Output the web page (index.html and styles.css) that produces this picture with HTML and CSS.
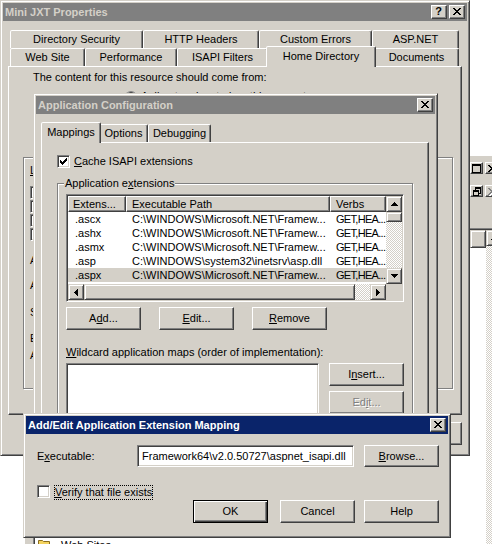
FILE: index.html
```html
<!DOCTYPE html>
<html lang="en">
<head>
<meta charset="utf-8">
<title>Mini JXT Properties</title>
<link rel="stylesheet" href="styles.css">
</head>
<body>

<div class="mmc">
  <div class="mmc-bar">
    <span class="mbtn"><svg width="9" height="9" viewBox="0 0 9 9"><path d="M0 0h9v2H0zM0 2h1v7H0zM8 2h1v7H8zM1 8h7v1H1z"/></svg></span>
    <span class="mbtn"><svg width="8" height="7" viewBox="0 0 8 7"><path d="M0 0h2v1H0zM6 0h2v1H6zM1 1h2v1H1zM5 1h2v1H5zM2 2h4v1H2zM3 3h2v1H3zM2 4h4v1H2zM1 5h2v1H1zM5 5h2v1H5zM0 6h2v1H0zM6 6h2v1H6z"/></svg></span>
  </div>
  <div class="mmc-bar">
    <span class="mbtn"><svg width="8" height="9" viewBox="0 0 8 9"><path d="M2 0h6v2H2zM2 2h1v1H2zM7 2h1v5H7zM6 6h1v1H6zM0 3h6v2H0zM0 5h1v4H0zM5 5h1v4H5zM1 8h4v1H1z"/></svg></span>
    <span class="mbtn off"><svg width="8" height="7" viewBox="0 0 8 7"><path d="M0 0h2v1H0zM6 0h2v1H6zM1 1h2v1H1zM5 1h2v1H5zM2 2h4v1H2zM3 3h2v1H3zM2 4h4v1H2zM1 5h2v1H1zM5 5h2v1H5zM0 6h2v1H0zM6 6h2v1H6z"/></svg></span>
  </div>
  <div class="mmc-list">
    <div class="mmc-body"><div class="mmc-head raised"></div></div>
    <div class="mmc-vs">
      <span class="sbtn"><svg width="7" height="4" viewBox="0 0 7 4"><path d="M3 0h1v1H3zM2 1h3v1H2zM1 2h5v1H1zM0 3h7v1H0z"/></svg></span>
      <div class="track"></div>
    </div>
  </div>
</div>

<div class="tree">
  <div class="tree-in">
    <svg class="folder" width="12" height="10" viewBox="0 0 12 10"><path d="M0.5 1.5h4l1 1h6v7h-11z" fill="#f4d35e" stroke="#8a6d1e"/></svg>
    <span>Web Sites</span>
  </div>
</div>

<div class="win main">
  <div class="titlebar inactive">
    <span class="ttl">Mini JXT Properties</span>
    <span class="cbtn help">?</span>
    <span class="cbtn"><svg width="8" height="7" viewBox="0 0 8 7"><path d="M0 0h2v1H0zM6 0h2v1H6zM1 1h2v1H1zM5 1h2v1H5zM2 2h4v1H2zM3 3h2v1H3zM2 4h4v1H2zM1 5h2v1H1zM5 5h2v1H5zM0 6h2v1H0zM6 6h2v1H6z"/></svg></span>
  </div>
  <div class="sheet main-sheet">
    <div class="tabrow r1">
      <div class="tab">Directory Security</div>
      <div class="tab">HTTP Headers</div>
      <div class="tab">Custom Errors</div>
      <div class="tab">ASP.NET</div>
    </div>
    <div class="tabrow r2">
      <div class="tab">Web Site</div>
      <div class="tab">Performance</div>
      <div class="tab">ISAPI Filters</div>
      <div class="tab sel">Home Directory</div>
      <div class="tab">Documents</div>
    </div>
    <div class="panel main-panel">
      <div class="hd-intro">The content for this resource should come from:</div>
      <div class="hd-radio"><span class="radio"></span><span>A directory located on this computer</span></div>
      <div class="hd-group">
        <div class="hd-lbl l1"><u>L</u>ocal path:</div>
        <div class="hd-checks">
          <span class="chk"></span>
          <span class="chk"></span>
          <span class="chk"></span>
          <span class="chk"></span>
        </div>
        <div class="hd-lbl l2">Application settings</div>
        <div class="hd-lbl l3">Application name:</div>
        <div class="hd-lbl l4">Starting point:</div>
        <div class="hd-lbl l5">Execute permissions:</div>
        <div class="hd-lbl l6">Application pool:</div>
      </div>
    </div>
  </div>
  <div class="main-buttons">
    <span class="btn">OK</span>
    <span class="btn">Cancel</span>
    <span class="btn">Apply</span>
    <span class="btn">Help</span>
  </div>
</div>

<div class="win appcfg">
  <div class="titlebar inactive">
    <span class="ttl">Application Configuration</span>
    <span class="cbtn"><svg width="8" height="7" viewBox="0 0 8 7"><path d="M0 0h2v1H0zM6 0h2v1H6zM1 1h2v1H1zM5 1h2v1H5zM2 2h4v1H2zM3 3h2v1H3zM2 4h4v1H2zM1 5h2v1H1zM5 5h2v1H5zM0 6h2v1H0zM6 6h2v1H6z"/></svg></span>
  </div>
  <div class="sheet ac-sheet">
    <div class="tabrow">
      <div class="tab sel">Mappings</div>
      <div class="tab">Options</div>
      <div class="tab">Debugging</div>
    </div>
    <div class="panel ac-panel">
      <div class="ac-cache">
        <span class="chk"><svg width="7" height="7" viewBox="0 0 7 7"><path d="M6 0h1v1H6zM5 1h2v1H5zM0 2h1v1H0zM4 2h3v1H4zM0 3h2v1H0zM3 3h3v1H3zM0 4h5v1H0zM1 5h3v1H1zM2 6h1v1H2z"/></svg></span>
        <span><u>C</u>ache ISAPI extensions</span>
      </div>
      <div class="group">
        <div class="group-lbl">Application e<u>x</u>tensions</div>
        <div class="lv sunken">
          <div class="lv-grid">
            <div class="lv-body">
              <div class="lv-head">
                <span class="hc c1">Extens...</span>
                <span class="hc c2">Executable Path</span>
                <span class="hc c3">Verbs</span>
              </div>
              <div class="lv-row"><span class="c1">.ascx</span><span class="c2">C:\WINDOWS\Microsoft.NET\Framew...</span><span class="c3">GET,HEA...</span></div>
              <div class="lv-row"><span class="c1">.ashx</span><span class="c2">C:\WINDOWS\Microsoft.NET\Framew...</span><span class="c3">GET,HEA...</span></div>
              <div class="lv-row"><span class="c1">.asmx</span><span class="c2">C:\WINDOWS\Microsoft.NET\Framew...</span><span class="c3">GET,HEA...</span></div>
              <div class="lv-row"><span class="c1">.asp</span><span class="c2">C:\WINDOWS\system32\inetsrv\asp.dll</span><span class="c3">GET,HEA...</span></div>
              <div class="lv-row sel"><span class="c1">.aspx</span><span class="c2">C:\WINDOWS\Microsoft.NET\Framew...</span><span class="c3">GET,HEA...</span></div>
              <div class="lv-row"><span class="c1">.axd</span><span class="c2">C:\WINDOWS\Microsoft.NET\Framew...</span><span class="c3">GET,HEA...</span></div>
            </div>
            <div class="vscroll">
              <span class="sbtn"><svg width="7" height="4" viewBox="0 0 7 4"><path d="M3 0h1v1H3zM2 1h3v1H2zM1 2h5v1H1zM0 3h7v1H0z"/></svg></span>
              <span class="raised vthumb"></span>
              <div class="track"></div>
              <span class="sbtn"><svg width="7" height="4" viewBox="0 0 7 4"><path d="M0 0h7v1H0zM1 1h5v1H1zM2 2h3v1H2zM3 3h1v1H3z"/></svg></span>
            </div>
            <div class="hscroll">
              <span class="sbtn"><svg width="4" height="7" viewBox="0 0 4 7"><path d="M3 0h1v7H3zM2 1h1v5H2zM1 2h1v3H1zM0 3h1v1H0z"/></svg></span>
              <span class="raised hthumb"></span>
              <div class="track"></div>
              <span class="sbtn"><svg width="4" height="7" viewBox="0 0 4 7"><path d="M0 0h1v7H0zM1 1h1v5H1zM2 2h1v3H2zM3 3h1v1H3z"/></svg></span>
            </div>
            <div class="corner"></div>
          </div>
        </div>
        <div class="btnrow">
          <span class="btn">A<u>d</u>d...</span>
          <span class="btn"><u>E</u>dit...</span>
          <span class="btn"><u>R</u>emove</span>
        </div>
        <div class="wc-lbl"><u>W</u>ildcard application maps (order of implementation):</div>
        <div class="wc-row">
          <div class="wc-list sunken"></div>
          <div class="wc-btns">
            <span class="btn">I<u>n</u>sert...</span>
            <span class="btn dis">Ed<u>i</u>t...</span>
          </div>
        </div>
      </div>
    </div>
  </div>
</div>

<div class="win addedit">
  <div class="titlebar active">
    <span class="ttl">Add/Edit Application Extension Mapping</span>
    <span class="cbtn"><svg width="8" height="7" viewBox="0 0 8 7"><path d="M0 0h2v1H0zM6 0h2v1H6zM1 1h2v1H1zM5 1h2v1H5zM2 2h4v1H2zM3 3h2v1H3zM2 4h4v1H2zM1 5h2v1H1zM5 5h2v1H5zM0 6h2v1H0zM6 6h2v1H6z"/></svg></span>
  </div>
  <div class="ae-row1">
    <span class="ae-lbl">E<u>x</u>ecutable:</span>
    <div class="textbox sunken">Framework64\v2.0.50727\aspnet_isapi.dll</div>
    <span class="btn"><u>B</u>rowse...</span>
  </div>
  <div class="ae-row2">
    <span class="chk"></span>
    <span class="focus"><u>V</u>erify that file exists</span>
  </div>
  <div class="ae-row3">
    <span class="btn def">OK</span>
    <span class="btn">Cancel</span>
    <span class="btn">Help</span>
  </div>
</div>

</body>
</html>
```

FILE: styles.css
```css
* { box-sizing: border-box; }
html, body { margin: 0; padding: 0; }
body {
  position: relative;
  width: 492px;
  height: 544px;
  overflow: hidden;
  background: #fff;
  font-family: "Liberation Sans", Arial, sans-serif;
  font-size: 11px;
  line-height: 13px;
  color: #000;
}
u { text-decoration: underline; text-underline-offset: 1px; }
svg { display: block; }

/* ---------- generic windows ---------- */
.win {
  position: absolute;
  background: #d4d0c8;
  border: 1px solid;
  border-color: #d4d0c8 #404040 #404040 #d4d0c8;
  box-shadow: inset 1px 1px 0 #fff, inset -1px -1px 0 #808080;
  padding: 2px;
}
.main { left: 0; top: 0; width: 470px; height: 456px; }
.appcfg { left: 33px; top: 93px; width: 405px; height: 360px; }
.addedit { left: 23px; top: 413px; width: 428px; height: 125px; }

.titlebar {
  display: flex;
  align-items: center;
  height: 18px;
  padding: 0 2px;
  font-weight: bold;
  white-space: nowrap;
}
.titlebar.inactive { background: #808080; color: #d4d0c8; }
.titlebar.active { background: #0a246a; color: #fff; }
.ttl { flex: 1; overflow: hidden; }
.cbtn {
  flex: none;
  display: flex;
  align-items: center;
  justify-content: center;
  width: 16px;
  height: 14px;
  padding: 0 1px 1px 0;
  background: #d4d0c8;
  color: #000;
  border: 1px solid;
  border-color: #fff #404040 #404040 #fff;
  box-shadow: inset -1px -1px 0 #808080;
  font-size: 11px;
}
.cbtn.help { margin-right: 2px; font-weight: bold; }
.cbtn svg { fill: #000; }

.raised {
  background: #d4d0c8;
  border: 1px solid;
  border-color: #d4d0c8 #404040 #404040 #d4d0c8;
  box-shadow: inset 1px 1px 0 #fff, inset -1px -1px 0 #808080;
}
.sunken {
  background: #fff;
  border: 1px solid;
  border-color: #808080 #fff #fff #808080;
  box-shadow: inset 1px 1px 0 #404040, inset -1px -1px 0 #d4d0c8;
  padding: 1px;
}

/* ---------- buttons / checkboxes ---------- */
.btn {
  flex: none;
  display: flex;
  align-items: center;
  justify-content: center;
  width: 75px;
  height: 23px;
  background: #d4d0c8;
  border: 1px solid;
  border-color: #fff #404040 #404040 #fff;
  box-shadow: inset -1px -1px 0 #808080;
  white-space: nowrap;
}
.btn.def {
  border-color: #000;
  box-shadow: inset 1px 1px 0 #fff, inset -1px -1px 0 #404040, inset -2px -2px 0 #808080;
}
.btn.dis { color: #808080; text-shadow: 1px 1px 0 #fff; }

.chk {
  flex: none;
  display: block;
  width: 13px;
  height: 13px;
  padding: 2px 0 0 2px;
  background: #fff;
  border: 1px solid;
  border-color: #808080 #fff #fff #808080;
  box-shadow: inset 1px 1px 0 #404040, inset -1px -1px 0 #d4d0c8;
}
.radio {
  flex: none;
  width: 12px;
  height: 12px;
  border-radius: 50%;
  background: #fff;
  border: 1px solid;
  border-color: #808080 #fff #fff #808080;
  box-shadow: inset 1px 1px 0 #404040;
}

/* ---------- tabs ---------- */
.sheet { margin-left: 5px; }
.main-sheet { margin-top: 9px; width: 454px; }
.ac-sheet { margin-top: 10px; width: 388px; }
.tabrow { display: flex; height: 18px; padding-left: 2px; }
.tab {
  flex: none;
  height: 18px;
  background: #d4d0c8;
  border: 1px solid;
  border-bottom: 0;
  border-color: #fff #404040 transparent #fff;
  border-radius: 2px 2px 0 0;
  box-shadow: inset -1px 0 0 #808080;
  text-align: center;
  line-height: 16px;
  white-space: nowrap;
  overflow: hidden;
}
.tab.sel {
  position: relative;
  z-index: 1;
  height: 21px;
  margin: -2px -2px 0;
  line-height: 18px;
}
.main-sheet .r1 .tab:nth-child(1) { width: 133px; }
.main-sheet .r1 .tab:nth-child(2) { width: 116px; }
.main-sheet .r1 .tab:nth-child(3) { width: 113px; }
.main-sheet .r1 .tab:nth-child(4) { width: 87px; }
.main-sheet .r2 .tab:nth-child(1) { width: 75px; }
.main-sheet .r2 .tab:nth-child(2) { width: 92px; }
.main-sheet .r2 .tab:nth-child(3) { width: 91px; }
.main-sheet .r2 .tab:nth-child(4) { width: 110px; }
.main-sheet .r2 .tab:nth-child(5) { width: 85px; }
.ac-sheet .tab:nth-child(1) { width: 60px; }
.ac-sheet .tab:nth-child(2) { width: 49px; }
.ac-sheet .tab:nth-child(3) { width: 63px; }

.panel {
  background: #d4d0c8;
  border: 1px solid;
  border-color: #fff #404040 #404040 #fff;
  box-shadow: inset -1px -1px 0 #808080;
}

/* ---------- main property sheet ---------- */
.main-panel { height: 349px; overflow: hidden; }
.hd-intro { margin: 4px 0 0 24px; }
.hd-radio {
  display: flex;
  align-items: center;
  gap: 4px;
  height: 13px;
  margin: 6px 0 0 116px;
}
.hd-group {
  width: 430px;
  height: 232px;
  margin: 54px 0 0 14px;
  padding: 6px 0 0 6px;
  border: 1px solid #808080;
  box-shadow: inset 1px 1px 0 #fff, 1px 1px 0 #fff;
}
.hd-checks { display: flex; flex-direction: column; gap: 1px; margin-top: 9px; }
.hd-lbl.l2 { margin-top: 13px; }
.hd-lbl.l3 { margin-top: 12px; }
.hd-lbl.l4 { margin-top: 14px; }
.hd-lbl.l5 { margin-top: 13px; }
.hd-lbl.l6 { margin-top: 4px; }
.main-buttons {
  display: flex;
  justify-content: flex-end;
  gap: 6px;
  margin-top: 7px;
  padding-right: 5px;
}

/* ---------- application configuration ---------- */
.ac-panel { height: 300px; overflow: hidden; }
.ac-cache {
  display: flex;
  align-items: center;
  gap: 4px;
  height: 13px;
  margin: 12px 0 0 15px;
}
.group {
  width: 356px;
  height: 250px;
  margin: 15px 0 0 15px;
  border: 1px solid #808080;
  box-shadow: inset 1px 1px 0 #fff, 1px 1px 0 #fff;
}
.group-lbl {
  width: max-content;
  margin: -7px 0 0 6px;
  padding: 0 1px;
  background: #d4d0c8;
}

.lv { width: 338px; height: 108px; margin: 4px 0 0 8px; }
.lv-grid {
  display: grid;
  grid-template-columns: 318px 16px;
  grid-template-rows: 88px 16px;
}
.lv-body { overflow: hidden; background: #fff; }
.lv-head, .lv-row { display: flex; white-space: nowrap; }
.lv-head { height: 16px; }
.hc {
  flex: none;
  height: 16px;
  overflow: hidden;
  padding-left: 5px;
  line-height: 14px;
  background: #d4d0c8;
  border: 1px solid;
  border-color: #fff #404040 #404040 #fff;
  box-shadow: inset -1px -1px 0 #808080;
}
.hc.c1 { padding-left: 4px; }
.lv-row { height: 14px; line-height: 14px; }
.lv-row span { flex: none; overflow: hidden; }
.c1 { width: 58px; }
.c2 { width: 204px; }
.c3 { width: 56px; }
.lv-row .c1 { padding-left: 7px; }
.lv-row .c2 { padding-left: 6px; }
.lv-row .c3 { padding-left: 6px; letter-spacing: -0.7px; }
.lv-row.sel { background: #d4d0c8; }

.sbtn {
  flex: none;
  display: flex;
  align-items: center;
  justify-content: center;
  width: 16px;
  height: 16px;
  background: #d4d0c8;
  border: 1px solid;
  border-color: #d4d0c8 #404040 #404040 #d4d0c8;
  box-shadow: inset 1px 1px 0 #fff, inset -1px -1px 0 #808080;
}
.sbtn svg { fill: #000; }
.vscroll { display: flex; flex-direction: column; }
.hscroll { display: flex; }
.vthumb { flex: none; width: 16px; height: 10px; }
.hthumb { flex: none; width: 271px; height: 16px; }
.track {
  flex: 1;
  background: repeating-conic-gradient(#fff 0 25%, #d4d0c8 0 50%) 0 0 / 2px 2px;
}
.corner { background: #d4d0c8; }

.btnrow { display: flex; gap: 18px; margin: 5px 0 0 8px; }
.wc-lbl { margin: 16px 0 0 8px; }
.wc-row { display: flex; margin: 4px 0 0 8px; }
.wc-list { width: 253px; height: 80px; }
.wc-btns { display: flex; flex-direction: column; gap: 5px; margin-left: 10px; }

/* ---------- add/edit mapping dialog ---------- */
.ae-row1 {
  display: flex;
  align-items: center;
  height: 22px;
  margin: 11px 0 0 11px;
}
.ae-lbl { width: 100px; }
.textbox {
  width: 217px;
  height: 22px;
  padding: 0 0 0 4px;
  line-height: 20px;
  white-space: nowrap;
  overflow: hidden;
}
.ae-row1 .btn { height: 22px; margin-left: 10px; }
.ae-row2 {
  display: flex;
  align-items: flex-start;
  margin: 18px 0 0 11px;
}
.focus { margin-left: 4px; border: 1px dotted #000; line-height: 13px; }
.ae-row3 { display: flex; justify-content: flex-end; padding-right: 9px; }
.ae-row3 .btn.def { margin-right: 12px; }
.ae-row3 .btn:nth-child(2) { margin-right: 9px; }

/* ---------- background windows ---------- */
.mmc {
  position: absolute;
  left: 470px;
  top: 155px;
  width: 40px;
  height: 400px;
  padding-top: 6px;
  background: #d4d0c8;
  border-top: 1px solid #fff;
}
.mmc-bar { display: flex; gap: 2px; height: 12px; }
.mmc-bar + .mmc-bar { margin-top: 11px; }
.mbtn {
  flex: none;
  display: flex;
  align-items: center;
  justify-content: center;
  width: 13px;
  height: 12px;
  background: #d4d0c8;
  border: 1px solid;
  border-color: #fff #404040 #404040 #fff;
  box-shadow: inset -1px -1px 0 #808080;
}
.mbtn svg { fill: #000; }
.mbtn.off svg { fill: #808080; filter: drop-shadow(1px 1px 0 #fff); }
.mmc-list {
  display: flex;
  height: 320px;
  margin-top: 31px;
  padding-top: 1px;
  border-top: 1px solid #808080;
  box-shadow: inset 0 1px 0 #404040;
}
.mmc-body { width: 16px; background: #fff; }
.mmc-head { height: 18px; }
.mmc-vs { display: flex; flex-direction: column; width: 16px; }

.tree {
  position: absolute;
  left: 25px;
  top: 535px;
  width: 200px;
  height: 20px;
  padding-left: 8px;
  background: #d4d0c8;
}
.tree-in {
  display: flex;
  align-items: flex-start;
  gap: 11px;
  height: 100%;
  padding: 4px 0 0 4px;
  background: #fff;
  border-left: 1px solid #808080;
  box-shadow: inset 1px 0 0 #404040;
}
```
